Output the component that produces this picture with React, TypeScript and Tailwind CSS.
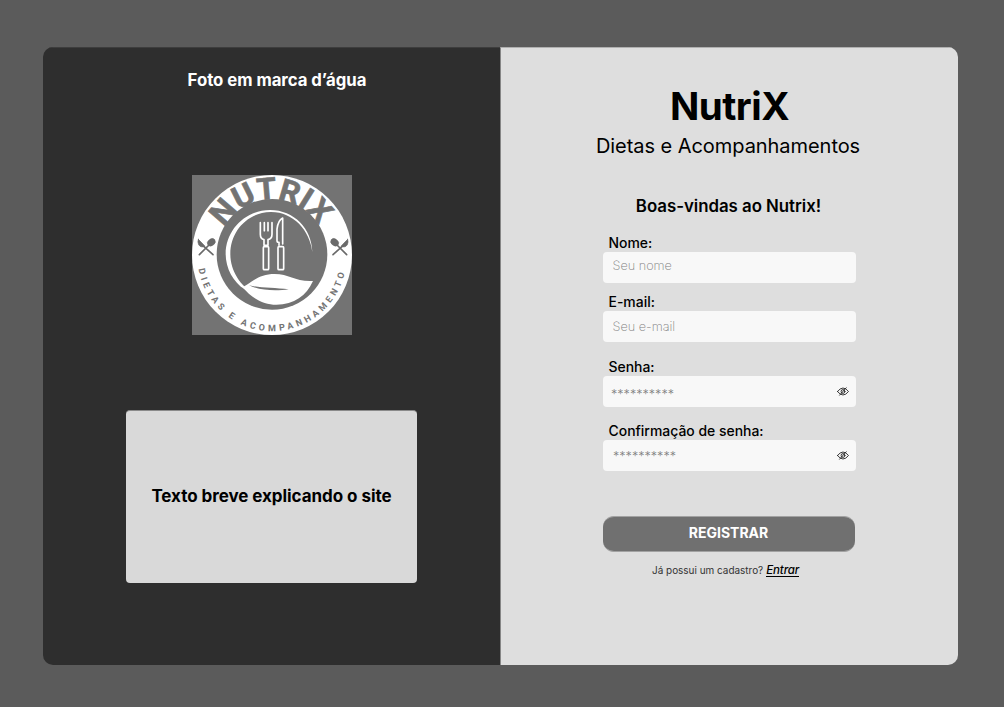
import React from "react";

function Utensils({ flip = false }: { flip?: boolean }) {
  return (
    <g
      transform={flip ? "translate(522 0) scale(-1 1)" : undefined}
      stroke="#6a6a6a"
      strokeLinecap="round"
      fill="#6a6a6a"
    >
      <path d="M40 254 L72 222" strokeWidth="5" />
      <path d="M50 226 L81 254" strokeWidth="5" />
      <ellipse cx="76" cy="217" rx="13" ry="10" transform="rotate(-38 76 217)" strokeWidth="1" />
      <path d="M37 208 L48 219 L57 229 Q44 234 38 224 Q34 216 37 208Z" strokeWidth="2" />
    </g>
  );
}

function Logo() {
  return (
    <svg viewBox="18 15 480 480" className="h-40 w-40" role="img">
      <defs>
        <path id="arc-top" d="M115 173 A163 163 0 0 1 406 184" />
        <path id="arc-bottom" d="M38 297 A223 223 0 0 0 478 297" />
      </defs>
      <rect x="18" y="15" width="480" height="480" fill="#737373" />
      <circle cx="258" cy="255" r="240" fill="#fff" />
      <circle cx="258" cy="253" r="166" fill="#737373" />
      <text
        fill="#737373"
        fontSize="92"
        className="font-['Roboto',sans-serif] font-bold"
        textLength="340"
        lengthAdjust="spacingAndGlyphs"
        stroke="#737373"
        strokeWidth="2"
      >
        <textPath href="#arc-top">NUTRIX</textPath>
      </text>
      <text
        fill="#737373"
        fontSize="27"
        className="font-['Roboto',sans-serif] font-bold"
        textLength="614"
        lengthAdjust="spacing"
      >
        <textPath href="#arc-bottom">DIETAS E ACOMPANHAMENTO</textPath>
      </text>
      <Utensils />
      <Utensils flip />
      <path
        d="M379 247 C378 176 324 120 252 120 C178 120 119 180 119 252 C119 295 142 337 176 358 L213 378 C164 350 133 304 133 252 C133 182 186 127 254 126 C320 125 372 180 379 247Z"
        fill="#fff"
      />
      <path
        d="M186 342 C210 325 230 312 266 312 C310 312 328 336 381 333 C361 377 325 404 271 404 C232 404 195 383 170 352Z"
        fill="#fff"
      />
      <path d="M189 346 C220 354 265 353 308 358 C273 363 225 363 189 346Z" fill="#737373" />
      <g fill="none" stroke="#fff" strokeWidth="5" strokeLinejoin="round" strokeLinecap="round">
        <path d="M223 158 V193 Q223 207 234 209 V226 H246 V209 Q258 207 258 193 V158" />
        <path d="M235 158 V182 M246 158 V182" />
        <rect x="232" y="230" width="16" height="69" rx="3" />
        <path d="M290 222 V144 Q276 151 273 177 V212 Q273 217 279 217 V226" />
        <rect x="276" y="230" width="17" height="69" rx="3" />
      </g>
    </svg>
  );
}

function EyeOff() {
  return (
    <svg
      viewBox="0 0 12 9"
      className="h-[9px] w-3 shrink-0"
      fill="none"
      stroke="#222"
      strokeWidth="0.9"
      strokeLinecap="round"
    >
      <path d="M0.5 4.5 Q6 -2.6 11.5 4.5 Q6 11.6 0.5 4.5Z" />
      <circle cx="6" cy="4.5" r="1.9" />
      <path d="M2.6 8.2 L9.2 0.8" />
    </svg>
  );
}

interface FieldProps {
  id: string;
  label: string;
  placeholder: string;
  className: string;
  inputClass: string;
  secret?: boolean;
}

function Field({ id, label, placeholder, className, inputClass, secret }: FieldProps) {
  return (
    <div className={className}>
      <label htmlFor={id} className="block h-[18px] pl-[5.5px] text-[13.95px] leading-[18px] font-medium">
        {label}
      </label>
      <div className="flex h-[31px] w-[253px] items-center rounded bg-[#f8f8f8] pr-[7px]">
        <input
          id={id}
          placeholder={placeholder}
          className={`h-full min-w-0 flex-1 bg-transparent outline-none placeholder:text-[#808080] ${inputClass}`}
        />
        {secret && <EyeOff />}
      </div>
    </div>
  );
}

export default function App() {
  return (
    <main className="h-[707px] w-[1004px] bg-[#5b5b5b] pt-[47px] pl-[43px] font-['Inter',sans-serif] text-black">
      <div className="flex h-[618px] w-[915px] overflow-hidden rounded-[10px]">
        <section className="flex w-[457px] flex-col items-center border-t border-[#3d3d3d] bg-[#2e2e2e]">
          <h2 className="mt-5 h-6 pl-[11px] text-[16.75px] leading-6 font-bold tracking-[-0.002em] whitespace-nowrap text-white">
            Foto em marca d’água
          </h2>
          <div className="mt-9 ml-px pt-[47px]">
            <Logo />
          </div>
          <div className="mt-[75px] flex h-[173px] w-[291px] items-center justify-center rounded border-t border-[#8a8a8a] bg-[#d9d9d9] text-[17px] font-bold tracking-[-0.003em] whitespace-nowrap">
            Texto breve explicando o site
          </div>
        </section>
        <section className="flex w-[458px] flex-col items-center border-t border-l border-t-[#b0b0b0] border-l-[#868686] bg-[#dedede]">
          <h1 className="mt-[33px] h-[50px] text-[38.5px] leading-[50px] font-bold tracking-[-0.5px]">NutriX</h1>
          <p className="h-[30px] pr-[3px] text-[20px] leading-[30px] tracking-[-0.05px]">
            Dietas e Acompanhamentos
          </p>
          <h2 className="mt-[33px] h-6 pr-[2px] text-[16.85px] leading-6 font-semibold tracking-[-0.002em]">
            Boas-vindas ao Nutrix!
          </h2>
          <form className="mt-[16px]">
            <Field
              id="nome"
              label="Nome:"
              placeholder="Seu nome"
              className=""
              inputClass="pb-[4px] pl-[9.5px] text-[12.7px] font-extralight"
            />
            <Field
              id="email"
              label="E-mail:"
              placeholder="Seu e-mail"
              className="mt-[10px]"
              inputClass="pl-[9.5px] text-[12.7px] font-extralight"
            />
            <Field
              id="senha"
              label="Senha:"
              placeholder="**********"
              className="mt-[16px]"
              inputClass="pt-[6px] pl-[8px] text-[12.6px] font-light"
              secret
            />
            <Field
              id="confirmacao"
              label="Confirmação de senha:"
              placeholder="**********"
              className="mt-[15px]"
              inputClass="pt-[2px] pl-[10px] text-[12.6px] font-light"
              secret
            />
            <button
              type="button"
              className="mt-[45px] block h-[36px] w-[252px] rounded-[11px] border-y border-[#a2a2a2] bg-[#707070] pr-[1px] pb-[3px] text-[14px] font-bold text-white"
            >
              REGISTRAR
            </button>
            <p className="mt-[9px] flex items-baseline pl-[49px] text-[9.95px] leading-[18px] whitespace-nowrap text-[#333]">
              Já possui um cadastro?
              <a href="#" className="ml-[3px] border-b border-black text-[11.5px] leading-[12px] font-medium tracking-[-0.1px] text-black italic">
                Entrar
              </a>
            </p>
          </form>
        </section>
      </div>
    </main>
  );
}
